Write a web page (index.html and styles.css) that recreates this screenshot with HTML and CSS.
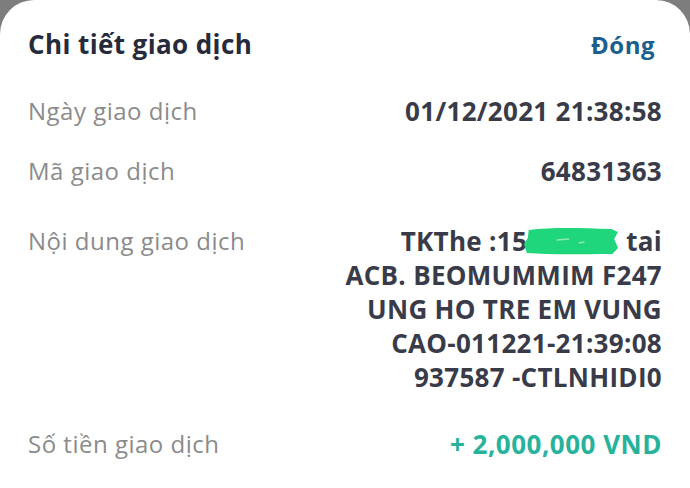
FILE: index.html
```html
<!DOCTYPE html>
<html lang="vi">
<head>
<meta charset="utf-8">
<link rel="stylesheet" href="styles.css">
</head>
<body>
<div class="sheet">
  <div class="header">
    <h1 class="title">Chi tiết giao dịch</h1>
    <span class="close">Đóng</span>
  </div>
  <div class="row r1">
    <span class="label">Ngày giao dịch</span>
    <span class="value">01/12/2021 21:38:58</span>
  </div>
  <div class="row r2">
    <span class="label">Mã giao dịch</span>
    <span class="value">64831363</span>
  </div>
  <div class="row r3">
    <span class="label">Nội dung giao dịch</span>
    <span class="value multi">TKThe :15<span class="redact">xxxxxx<svg class="blob" viewBox="0 0 100 30" preserveAspectRatio="none"><path d="M6 4 C30 1 60 2 92 3 L99 6 L95 13 L99 22 L93 28 C60 28 30 29 4 27 L1 18 L5 12 Z" fill="#1fd67c"/><path d="M35 14 L48 13 M58 17 L64 16" stroke="#8fe9b6" stroke-width="1.5"/></svg></span> tai<br>ACB. BEOMUMMIM F247<br>UNG HO TRE EM VUNG<br>CAO-011221-21:39:08<br>937587 -CTLNHIDI0</span>
  </div>
  <div class="row r4">
    <span class="label">Số tiền giao dịch</span>
    <span class="value amount">+ 2,000,000 VND</span>
  </div>
</div>
</body>
</html>
```
FILE: styles.css
```css
html, body {
  margin: 0;
  padding: 0;
  background: #7d7d7d;
}
body {
  width: 690px;
  height: 488px;
  overflow: hidden;
  font-family: "Open Sans", "Liberation Sans", sans-serif;
}
.sheet {
  background: #ffffff;
  height: 488px;
  border-radius: 34px 34px 0 0;
  padding: 0 28px;
  box-sizing: border-box;
}
.header {
  display: flex;
  justify-content: space-between;
  align-items: baseline;
  padding-top: 26px;
}
.title {
  margin: 0;
  font-size: 26px;
  line-height: 36px;
  font-weight: 700;
  letter-spacing: 0.4px;
  color: #272a3a;
}
.close {
  font-size: 24px;
  font-weight: 700;
  letter-spacing: 0.5px;
  color: #1c5f8e;
  margin-right: 7px;
}
.row {
  display: flex;
  justify-content: space-between;
  align-items: flex-start;
  line-height: 34px;
}
.r1 { margin-top: 32px; }
.r2 { margin-top: 26px; }
.r3 { margin-top: 36px; }
.r4 { margin-top: 33px; }
.label {
  font-size: 24px;
  letter-spacing: 0.5px;
  color: #8b8b8b;
}
.value {
  font-size: 26px;
  font-weight: 700;
  letter-spacing: 0.3px;
  color: #393b49;
  text-align: right;
}
.amount {
  color: #27b39b;
  letter-spacing: 0.5px;
}
.redact {
  position: relative;
  color: transparent;
  display: inline-block;
}
.blob {
  position: absolute;
  left: -4px;
  top: 2px;
  width: 96px;
  height: 30px;
}
```
